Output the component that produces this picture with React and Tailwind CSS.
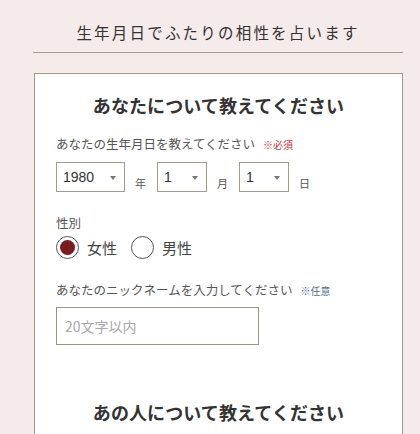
import React from "react";

const jp = { fontFamily: '"Noto Sans CJK JP", "Noto Sans", sans-serif' };

function Select({ value, width }) {
  return (
    <div
      className="relative h-[30px] border border-[#a39c8a] bg-white flex items-center pl-[6px] text-[14px] text-[#333]"
      style={{ width }}
    >
      <span className="leading-none" style={{ fontFamily: '"Liberation Sans", Arial, sans-serif' }}>{value}</span>
      <span className="absolute right-[8px] top-[13px] w-0 h-0 border-l-[3px] border-r-[3px] border-t-[4px] border-l-transparent border-r-transparent border-t-[#777]" />
    </div>
  );
}

function Radio({ checked, label }) {
  return (
    <div className="flex items-center gap-[8px]">
      <div className="w-[23px] h-[23px] rounded-full border border-[#555] bg-white flex items-center justify-center">
        {checked && <div className="w-[15px] h-[15px] rounded-full bg-[#7a1c1f]" />}
      </div>
      <span className="text-[15px] text-[#444] leading-none">{label}</span>
    </div>
  );
}

export default function App() {
  return (
    <div className="w-[420px] h-[434px] overflow-hidden bg-[#f5ebea]" style={jp}>
      <div className="ml-[33px] w-[370px]">
        <div className="pt-[21px] text-center text-[15.5px] tracking-[2.2px] text-[#333] leading-[22px]">
          生年月日でふたりの相性を占います
        </div>
        <div className="mt-[9px] h-px bg-[#a89d88]" />
      </div>
      <div className="ml-[34px] w-[369px] mt-[20px] border border-[#a39a8a] bg-white px-[21px] pb-[60px] min-h-[400px]">
        <h2 className="pt-[18px] text-center text-[18px] font-bold text-[#333] leading-[26px] tracking-[0.1px]">
          あなたについて教えてください
        </h2>
        <div className="mt-[17px] flex items-baseline text-[12.5px] text-[#555] leading-[18px]">
          あなたの生年月日を教えてください
          <span className="ml-[8px] text-[10px] text-[#c0393b]">※必須</span>
        </div>
        <div className="mt-[8px] flex items-end text-[11px] text-[#555]">
          <Select value="1980" width={69} />
          <span className="ml-[10px] mr-[11px] mb-[3px] leading-none">年</span>
          <Select value="1" width={50} />
          <span className="ml-[10px] mr-[11px] mb-[3px] leading-none">月</span>
          <Select value="1" width={50} />
          <span className="ml-[10px] mb-[3px] leading-none">日</span>
        </div>
        <div className="mt-[22px] text-[12.5px] text-[#555] leading-[18px]">性別</div>
        <div className="mt-[4px] flex items-center gap-[14px]">
          <Radio checked label="女性" />
          <Radio label="男性" />
        </div>
        <div className="mt-[22px] flex items-baseline text-[12.5px] text-[#555] leading-[18px]">
          あなたのニックネームを入力してください
          <span className="ml-[8px] text-[10px] text-[#4e6fa0]">※任意</span>
        </div>
        <div className="mt-[7px] w-[203px] h-[38px] border border-[#9a9484] bg-white flex items-center pl-[8px] text-[14px] text-[#aaa]">
          20文字以内
        </div>
        <h2 className="mt-[54px] text-center text-[18px] font-bold text-[#333] leading-[26px] tracking-[0.1px]">
          あの人について教えてください
        </h2>
      </div>
    </div>
  );
}
